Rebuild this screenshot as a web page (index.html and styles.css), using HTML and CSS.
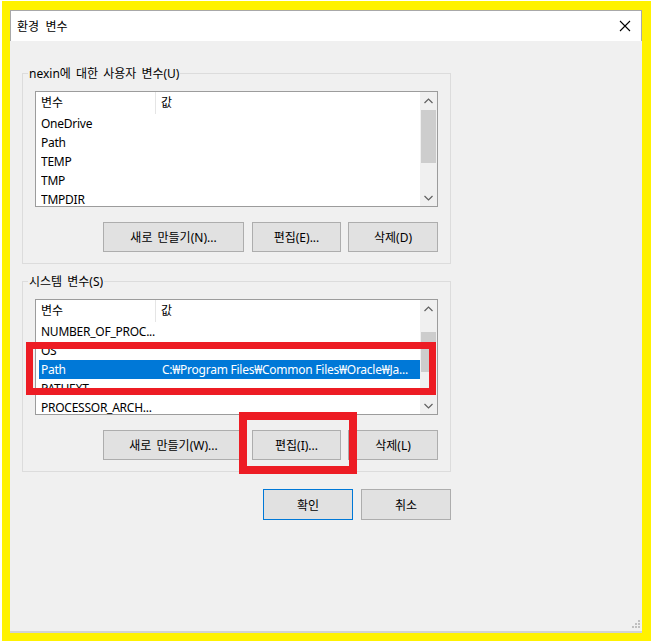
FILE: index.html
```html
<!DOCTYPE html>
<html lang="ko">
<head>
<meta charset="utf-8">
<title>환경 변수</title>
<link rel="stylesheet" href="styles.css">
</head>
<body>
<div class="frame">
  <div class="window">
    <div class="titlebar">
      <span class="title">환경 변수</span>
      <svg class="close" width="12" height="12" viewBox="0 0 12 12"><path d="M1 1 L11 11 M11 1 L1 11" stroke="#000" stroke-width="1.1" fill="none"/></svg>
    </div>
    <div class="client">
      <div class="group group-user">
        <span class="legend">nexin에 대한 사용자 변수(U)</span>
        <div class="listbox">
          <div class="list-body">
            <div class="list-head"><span class="hcol1">변수</span><span class="hcol2">값</span></div>
            <div class="row"><span class="col1">OneDrive</span><span class="col2"></span></div>
            <div class="row"><span class="col1">Path</span><span class="col2"></span></div>
            <div class="row"><span class="col1">TEMP</span><span class="col2"></span></div>
            <div class="row"><span class="col1">TMP</span><span class="col2"></span></div>
            <div class="row"><span class="col1">TMPDIR</span><span class="col2"></span></div>
          </div>
          <div class="scrollbar">
            <div class="sb-btn"><svg width="9" height="6" viewBox="0 0 9 6"><path d="M0.5 5 L4.5 1 L8.5 5" stroke="#606060" stroke-width="1.2" fill="none"/></svg></div>
            <div class="sb-track"><div class="thumb thumb-user"></div></div>
            <div class="sb-btn"><svg width="9" height="6" viewBox="0 0 9 6"><path d="M0.5 1 L4.5 5 L8.5 1" stroke="#606060" stroke-width="1.2" fill="none"/></svg></div>
          </div>
        </div>
        <div class="btn-row">
          <button class="btn btn-new">새로 만들기(N)...</button>
          <button class="btn btn-edit">편집(E)...</button>
          <button class="btn btn-del">삭제(D)</button>
        </div>
      </div>

      <div class="group group-sys">
        <span class="legend">시스템 변수(S)</span>
        <div class="listbox">
          <div class="list-body">
            <div class="list-head"><span class="hcol1">변수</span><span class="hcol2">값</span></div>
            <div class="row"><span class="col1">NUMBER_OF_PROC...</span><span class="col2"></span></div>
            <div class="row"><span class="col1">OS</span><span class="col2"></span></div>
            <div class="row selected"><span class="col1">Path</span><span class="col2">C:₩Program Files₩Common Files₩Oracle₩Ja...</span></div>
            <div class="row"><span class="col1">PATHEXT</span><span class="col2"></span></div>
            <div class="row"><span class="col1">PROCESSOR_ARCH...</span><span class="col2"></span></div>
          </div>
          <div class="scrollbar">
            <div class="sb-btn"><svg width="9" height="6" viewBox="0 0 9 6"><path d="M0.5 5 L4.5 1 L8.5 5" stroke="#606060" stroke-width="1.2" fill="none"/></svg></div>
            <div class="sb-track"><div class="thumb thumb-sys"></div></div>
            <div class="sb-btn"><svg width="9" height="6" viewBox="0 0 9 6"><path d="M0.5 1 L4.5 5 L8.5 1" stroke="#606060" stroke-width="1.2" fill="none"/></svg></div>
          </div>
        </div>
        <div class="btn-row">
          <button class="btn btn-new">새로 만들기(W)...</button>
          <button class="btn btn-edit">편집(I)...</button>
          <button class="btn btn-del">삭제(L)</button>
        </div>
      </div>

      <div class="action-row">
        <button class="btn btn-ok">확인</button>
        <button class="btn btn-cancel">취소</button>
      </div>

      <svg class="grip" width="10" height="10" viewBox="0 0 10 10">
        <rect x="7" y="0" width="2" height="2" fill="#c0c0c0"/>
        <rect x="4" y="3" width="2" height="2" fill="#c0c0c0"/>
        <rect x="7" y="3" width="2" height="2" fill="#c0c0c0"/>
        <rect x="1" y="6" width="2" height="2" fill="#c0c0c0"/>
        <rect x="4" y="6" width="2" height="2" fill="#c0c0c0"/>
        <rect x="7" y="6" width="2" height="2" fill="#c0c0c0"/>
      </svg>
    </div>

    <div class="mark mark-path"></div>
    <div class="mark mark-edit"></div>
  </div>
</div>
</body>
</html>
```
FILE: styles.css
```css
* { box-sizing: border-box; }

html, body {
  margin: 0;
  padding: 0;
  background: #ffffff;
}

body {
  font-family: "Noto Sans", "Noto Sans CJK KR", sans-serif;
  font-size: 12px;
  color: #000;
}

.frame {
  margin: 1px 0 0 2px;
  width: 649px;
  height: 640px;
  border-style: solid;
  border-color: #fff200;
  border-width: 9px 9px 8px 8px;
}

.window {
  position: relative;
  width: 632px;
  height: 623px;
  display: flex;
  flex-direction: column;
}

.titlebar {
  height: 31px;
  flex: none;
  background: #ffffff;
  border: 1px solid #a8a8a8;
  border-bottom: none;
  display: flex;
  align-items: center;
  justify-content: space-between;
  padding: 0 10px 0 6px;
}

.title {
  font-family: "Noto Sans CJK KR", sans-serif;
  font-size: 12px;
  line-height: 16px;
  word-spacing: 3px;
}

.close { display: block; }

.client {
  position: relative;
  flex: 1;
  background: #f0f0f0;
  border-bottom: 2px solid #d2d2d2;
  padding-left: 12px;
  display: flex;
  flex-direction: column;
}

.group {
  width: 429px;
  border: 1px solid #dcdcdc;
  padding: 0 12px 11px 12px;
  display: flex;
  flex-direction: column;
  align-items: flex-start;
}

.group-user { margin-top: 32px; }
.group-sys { margin-top: 17px; }

.legend {
  margin-top: -8px;
  margin-left: -7px;
  padding: 0 1px;
  height: 16px;
  line-height: 16px;
  background: #f0f0f0;
  white-space: nowrap;
  word-spacing: 2px;
}

.listbox {
  margin-top: 9px;
  width: 403px;
  height: 116px;
  border: 1px solid #9c9c9c;
  background: #ffffff;
  display: flex;
  overflow: hidden;
}

.list-body {
  flex: 1;
  min-width: 0;
  overflow: hidden;
}

.list-head {
  height: 22px;
  display: flex;
  align-items: stretch;
  line-height: 22px;
}

.hcol1 {
  width: 120px;
  padding-left: 5px;
  border-right: 1px solid #e5e5e5;
  flex: none;
}

.hcol2 {
  padding-left: 5px;
}

.row {
  height: 19px;
  line-height: 19px;
  margin-left: 3px;
  padding-left: 2px;
  display: flex;
  white-space: nowrap;
  letter-spacing: -0.25px;
}

.col1 {
  width: 121px;
  flex: none;
  overflow: hidden;
}

.col2 {
  flex: 1;
  min-width: 0;
  overflow: hidden;
}

.row.selected {
  background: #0078d7;
  color: #ffffff;
}

.scrollbar {
  width: 17px;
  flex: none;
  background: #f0f0f0;
  display: flex;
  flex-direction: column;
}

.sb-btn {
  height: 17px;
  flex: none;
  display: flex;
  align-items: center;
  justify-content: center;
}

.sb-track {
  flex: 1;
  display: flex;
  flex-direction: column;
  align-items: center;
}

.thumb {
  width: 15px;
  background: #cdcdcd;
}

.thumb-user { margin-top: 1px; height: 53px; }
.thumb-sys { margin-top: 15px; height: 40px; }

.btn-row {
  margin-top: 15px;
  align-self: stretch;
  display: flex;
  justify-content: flex-end;
}

.btn {
  font-family: "Noto Sans", "Noto Sans CJK KR", sans-serif;
  font-size: 12px;
  color: #000;
  background: #e1e1e1;
  border: 1px solid #adadad;
  height: 30px;
  padding: 0;
  margin: 0;
  white-space: nowrap;
  word-spacing: 2px;
}

.btn-new { width: 141px; }
.btn-edit { width: 89px; margin-left: 8px; }
.btn-del { width: 90px; margin-left: 7px; }

.action-row {
  width: 429px;
  margin-top: 17px;
  display: flex;
  justify-content: flex-end;
}

.btn-ok {
  width: 90px;
  height: 31px;
  border-color: #0078d7;
}

.btn-cancel {
  width: 90px;
  height: 31px;
  margin-left: 8px;
}

.grip {
  position: absolute;
  right: 1px;
  bottom: 1px;
}

.mark {
  position: absolute;
  border: 7px solid #ed1c24;
}

.mark-path {
  left: 16px;
  top: 332px;
  width: 410px;
  height: 53px;
}

.mark-edit {
  left: 229px;
  top: 402px;
  width: 118px;
  height: 62px;
  border-width: 8px;
}
```
